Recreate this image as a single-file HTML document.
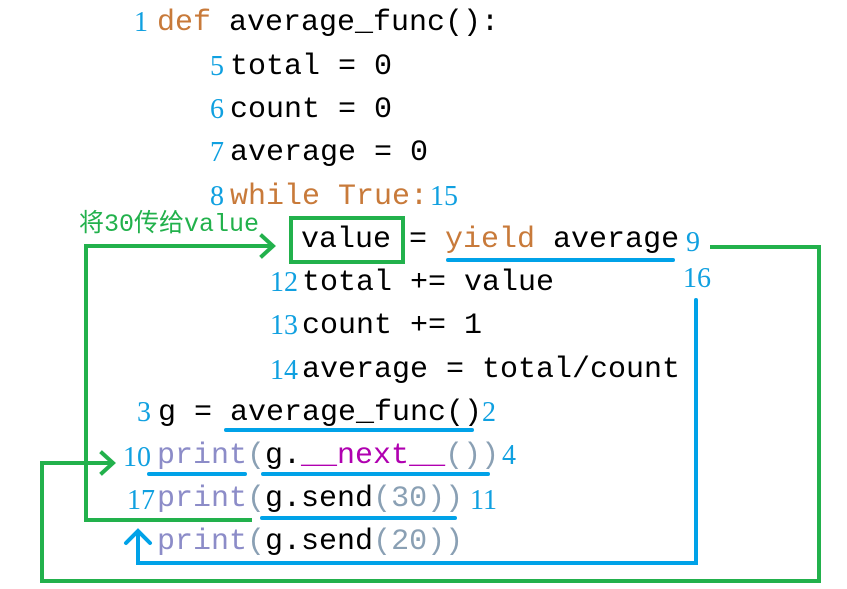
<!DOCTYPE html>
<html><head><meta charset="utf-8"><style>
body{margin:0;width:847px;height:589px;background:#fff;position:relative;overflow:hidden;font-family:"Liberation Mono","Noto Sans CJK SC",monospace;}
.l{position:absolute;font-size:30px;line-height:30px;white-space:pre;color:#000;}
.n{position:absolute;font-family:"Liberation Serif",serif;font-size:28px;line-height:30px;color:#10a0e0;}
.o{color:#c87a3a}.p{color:#8c8cc8}.g{color:#8aa0b4}.m{color:#b000b0}
svg{position:absolute;left:0;top:0}
</style></head><body>
<div class="n" style="left:134px;top:8px">1</div><div class="l" style="left:157px;top:8px"><span class="o">def</span> average_func():</div>
<div class="n" style="left:210px;top:52px">5</div><div class="l" style="left:230px;top:52px">total = 0</div>
<div class="n" style="left:210px;top:95px">6</div><div class="l" style="left:230px;top:95px">count = 0</div>
<div class="n" style="left:210px;top:138px">7</div><div class="l" style="left:230px;top:138px">average = 0</div>
<div class="n" style="left:210px;top:182px">8</div><div class="l" style="left:230px;top:182px"><span class="o">while True:</span></div><div class="n" style="left:430px;top:182px">15</div>
<div class="l" style="left:301px;top:225px">value = <span class="o">yield</span> average</div><div class="n" style="left:686px;top:228px">9</div>
<div class="n" style="left:270px;top:268px">12</div><div class="l" style="left:302px;top:268px">total += value</div><div class="n" style="left:683px;top:264px">16</div>
<div class="n" style="left:270px;top:311px">13</div><div class="l" style="left:302px;top:311px">count += 1</div>
<div class="n" style="left:270px;top:356px">14</div><div class="l" style="left:302px;top:355px">average = total/count</div>
<div class="n" style="left:137px;top:398px">3</div><div class="l" style="left:158px;top:398px">g = average_func()</div><div class="n" style="left:482px;top:398px">2</div>
<div class="n" style="left:123px;top:443px">10</div><div class="l" style="left:157px;top:441px"><span class="p">print</span><span class="g">(</span>g.<span class="m">__next__</span><span class="g">())</span></div><div class="n" style="left:502px;top:441px">4</div>
<div class="n" style="left:127px;top:486px">17</div><div class="l" style="left:157px;top:484px"><span class="p">print</span><span class="g">(</span>g.send<span class="g">(30))</span></div><div class="n" style="left:470px;top:486px">11</div>
<div class="l" style="left:157px;top:527px"><span class="p">print</span><span class="g">(</span>g.send<span class="g">(20))</span></div>
<div style="position:absolute;left:79px;top:211px;font-size:25px;line-height:28px;color:#22b14c;font-family:'Liberation Mono','Noto Sans CJK SC',monospace;white-space:pre">将30传给value</div>
<svg width="847" height="589" fill="none" stroke-width="4" stroke-linecap="square">
<rect x="291" y="218" width="112" height="44" stroke="#22b14c"/>
<g stroke="#22b14c">
<path d="M86 520V246H272M262 236L273 246L262 256"/>
<path d="M86 520H250"/>
<path d="M712 247H819V581H42V463H112M102 453L113 463L102 473"/>
</g>
<g stroke="#00a2e8" stroke-linecap="round">
<path d="M448 260H673"/>
<path d="M696 300V563H138V532M126 543L138 531L150 543"/>
<path d="M226 430H472"/>
<path d="M149 474H245"/>
<path d="M263 474H488"/>
<path d="M262 518H455"/>
</g>
</svg>
</body></html>
